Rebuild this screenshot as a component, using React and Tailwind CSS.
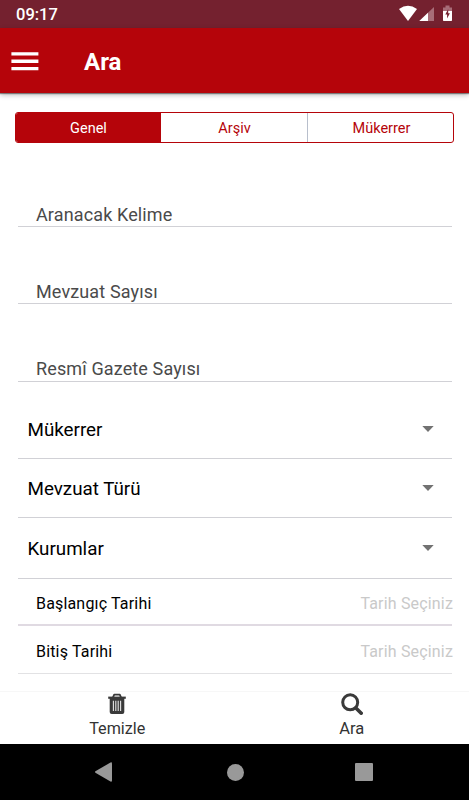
import React from "react";

const line = "mr-[17px] ml-[18px] flex items-end border-[#d1d1d6]";

function Field({ label, className }) {
  return (
    <div className={`${line} border-b pl-[18px] text-[18px] tracking-[0.13px] text-[#4a4a4a] ${className}`}>
      <span>{label}</span>
    </div>
  );
}

function Select({ label, className }) {
  return (
    <div className={`${line} justify-between border-b pr-[18px] pl-[9.5px] text-[18.800px] leading-6 text-black ${className}`}>
      <span>{label}</span>
      <svg width="12" height="6" viewBox="0 0 12 6" className="mb-[10px]" fill="#727272">
        <path d="M.3 0h11.400L6 6z" />
      </svg>
    </div>
  );
}

function DateRow({ label, className }) {
  return (
    <div className={`${line} justify-between pl-[18px] text-[16px] leading-6 tracking-[0.17px] text-black ${className}`}>
      <span>{label}</span>
      <span className="-mr-px text-[#c9c9c9]">Tarih Seçiniz</span>
    </div>
  );
}

export default function App() {
  return (
    <div className="flex h-[800px] w-[469px] flex-col overflow-hidden bg-white font-['Roboto',sans-serif]">
      <div className="flex h-7 shrink-0 items-center justify-between bg-[#74212f] pl-4 text-white">
        <span className="pt-px text-[16.5px] leading-6 font-medium">09:17</span>
        <svg width="72" height="28" viewBox="397 0 72 28">
          <path d="M399 9Q408 2.500 417 9L408 21z" fill="#fff" />
          <path d="M419.300 21L434 7V21z" fill="#a76d78" />
          <path d="M419.300 21L428 12.700V21z" fill="#fff" />
          <path d="M443 11V7.500h2.500V5.500h4v2H452V11z" fill="#a76d78" />
          <path d="M443 11h9v9.300q0 .7-.7.700h-7.600q-.7 0-.7-.7z" fill="#fff" />
          <path d="M448.200 9L445.300 14.600h1.800v4L449.900 13.200h-1.700z" fill="#74212f" />
        </svg>
      </div>
      <header className="z-10 flex h-[65px] shrink-0 items-center bg-[#b5040a] pl-[11px] text-white shadow-[0_1px_1px_rgba(0,0,0,0.4),0_2px_5px_rgba(0,0,0,0.28)]">
        <svg width="28" height="20" viewBox="0 0 28 20" fill="#fff">
          <path d="M.4 1.200h27v3.300H.4zM.4 8.600h27v3.300H.4zM.4 16h27v3.300H.4z" />
        </svg>
        <h1 className="ml-[45px] pt-[3px] text-[24px] leading-7 font-bold">Ara</h1>
      </header>

      <div className="mt-[19px] mr-[15px] ml-[15px] flex h-[31px] shrink-0 overflow-hidden rounded-[3px] border border-[#b5040a] text-[14.5px] text-[#b5040a]">
        <div className="flex w-[145px] items-center justify-center bg-[#b5040a] pt-[2px] text-white">Genel</div>
        <div className="flex w-[147px] items-center justify-center border-r border-[#b8bfcc] pt-[2px] pl-px">Arşiv</div>
        <div className="flex flex-1 items-center justify-center pt-[2px] pl-[2px]">Mükerrer</div>
      </div>

      <Field label="Aranacak Kelime" className="h-[84px] leading-[23px]" />
      <Field label="Mevzuat Sayısı" className="h-[77px] leading-[22px]" />
      <Field label="Resmî Gazete Sayısı" className="h-[78px] leading-6" />
      <Select label="Mükerrer" className="h-[77px] pb-[16px]" />
      <Select label="Mevzuat Türü" className="h-[59px] pb-[16px]" />
      <Select label="Kurumlar" className="h-[61px] pb-[17px]" />
      <DateRow label="Başlangıç Tarihi" className="h-[47px] border-b-2 border-[#e0dae2] pb-[8px]" />
      <DateRow label="Bitiş Tarihi" className="h-[48px] border-b border-[#e2e2e4] pb-[9px]" />

      <nav className="mt-[17px] flex h-[53px] shrink-0 border-t border-[#f7f7f7] text-[16.5px] leading-5 text-[#333]">
        <div className="flex flex-1 flex-col items-center">
          <svg width="18" height="22" viewBox="0 0 18 22" className="mt-px" fill="none" stroke="#3a3a3a">
            <path d="M5 4.400L6.200 1.600h5.600l1.200 2.800" strokeWidth="1.800" strokeLinejoin="round" />
            <path d="M.2 4.700H17.800" strokeWidth="2.200" />
            <path d="M1.700 5H16.300V19Q16.300 21 14.300 21H3.700Q1.700 21 1.700 19z" fill="#3a3a3a" stroke="none" />
            <path d="M5.400 7.700V18M7.800 7.700V18M10.200 7.700V18M12.600 7.700V18" stroke="#e4e4e4" strokeWidth="1.100" />
          </svg>
          <span className="mt-[4px] text-[16.200px]">Temizle</span>
        </div>
        <div className="flex flex-1 flex-col items-center">
          <svg width="22" height="22" viewBox="0 0 22 22" className="mt-px" fill="none" stroke="#3a3a3a">
            <circle cx="9.200" cy="9.300" r="7.500" strokeWidth="3" />
            <path d="M14.900 14.900L20.200 20.200" strokeWidth="3.600" strokeLinecap="round" />
          </svg>
          <span className="mt-[4px]">Ara</span>
        </div>
      </nav>

      <div className="flex h-14 shrink-0 items-center bg-black pl-[95px]">
        <svg width="17" height="20" viewBox="0 0 17 20" fill="#999">
          <path d="M.4 9.300Q-.3 10 .4 10.700L15.500 19.500Q17 20.200 17 18.600V1.400Q17-.2 15.500.5z" />
        </svg>
        <div className="ml-[114.5px] h-[17px] w-[17px] rounded-full bg-[#999]" />
        <div className="ml-[111px] h-[18px] w-[18px] rounded-[1px] bg-[#999]" />
      </div>
    </div>
  );
}
